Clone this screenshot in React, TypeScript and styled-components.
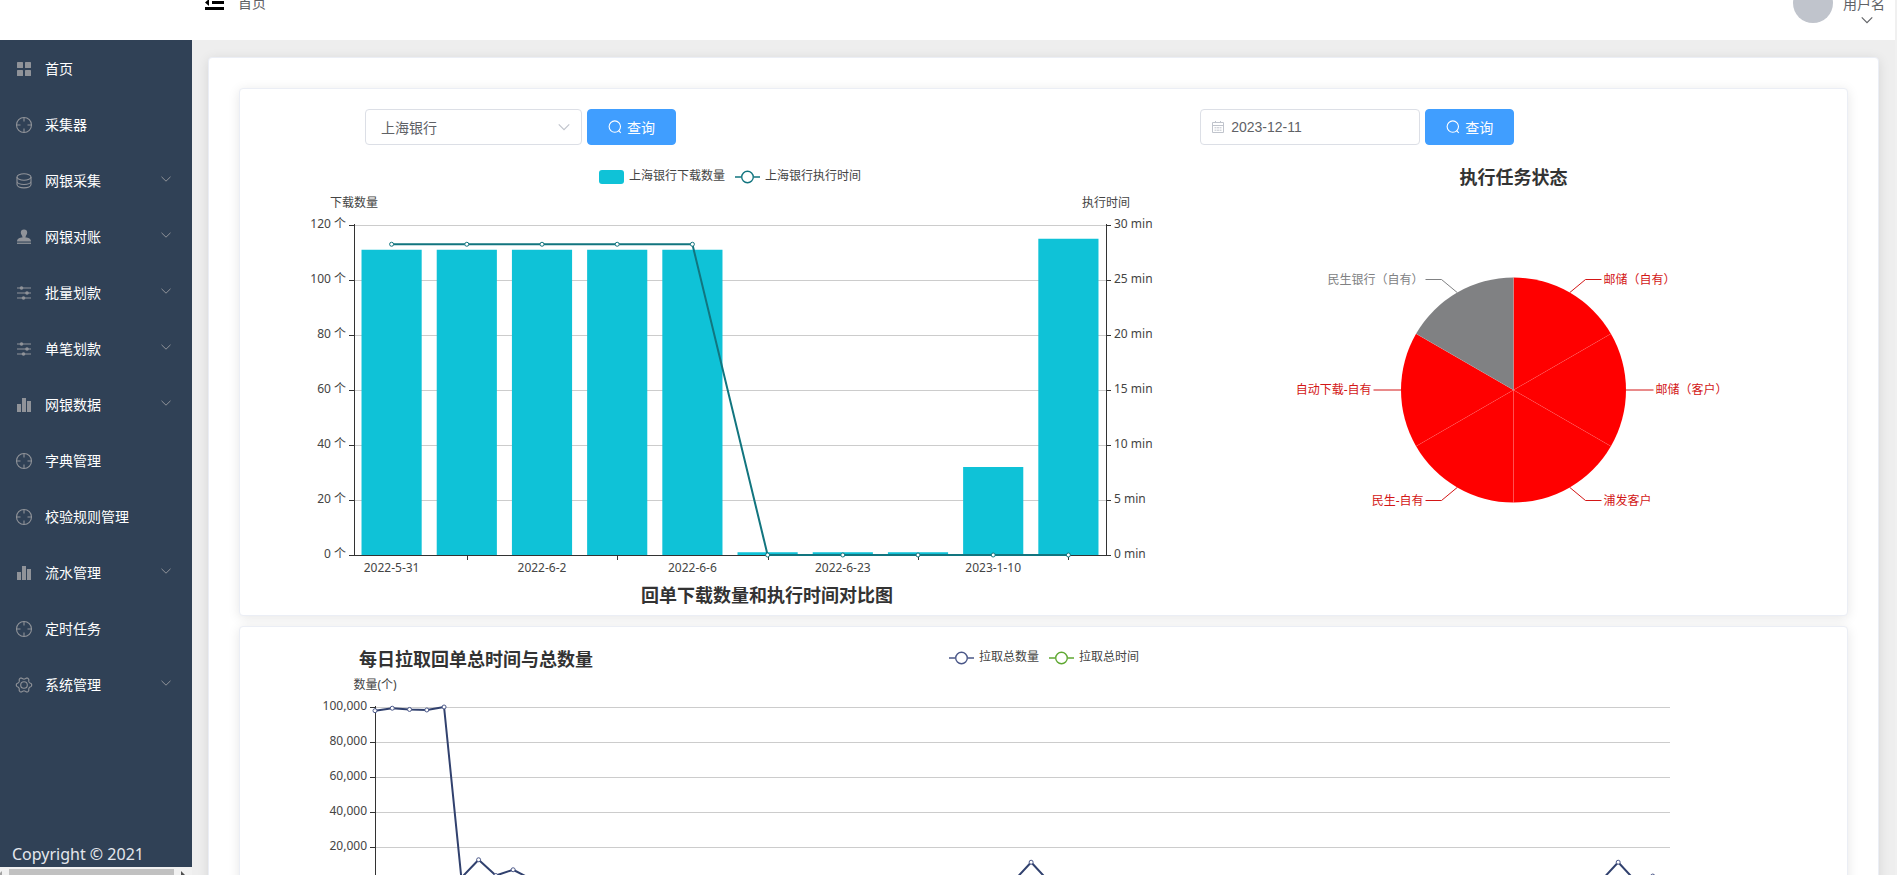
import React, { useLayoutEffect, useRef, useState } from 'react';
import styled, { createGlobalStyle } from 'styled-components';

const fontStack = '"Noto Sans", "Noto Sans CJK SC", sans-serif';

const GlobalStyle = createGlobalStyle`
  * { box-sizing: border-box; }
  body {
    margin: 0;
    font-family: ${fontStack};
    font-size: 14px;
    color: #606266;
    background: #f0f0f0;
  }
  button, input, select { font-family: inherit; font-size: 14px; }
`;

/* ---------- frame ---------- */

const Shell = styled.div`
  display: flex;
  flex-direction: column;
  height: 100vh;
  overflow: hidden;
  padding-right: 2px;
  background: #f0f0f0;
`;

const Header = styled.header`
  display: flex;
  flex: none;
  align-items: flex-end;
  justify-content: space-between;
  height: 40px;
  overflow: hidden;
  padding: 0 10px 17px 204px;
  background: #fff;
`;

const HeaderGroup = styled.div`
  display: flex;
  align-items: center;
  gap: 12px;
  height: 40px;
`;

const IconButton = styled.button`
  display: flex;
  padding: 0;
  border: 0;
  background: none;
  cursor: pointer;
`;

const Crumb = styled.a`
  line-height: 20px;
  color: #606266;
  text-decoration: none;
`;

const UserButton = styled.button`
  display: flex;
  align-items: flex-start;
  gap: 10px;
  height: 40px;
  padding: 0;
  border: 0;
  background: none;
  color: #606266;
  cursor: pointer;
`;

const Avatar = styled.span`
  width: 40px;
  height: 40px;
  border-radius: 50%;
  background: #c0c4cc;
`;

const UserName = styled.span`
  display: flex;
  flex-direction: column;
  align-items: center;
  padding-top: 12px;
  line-height: 18px;
`;

const UserArrow = styled.span`
  display: flex;
  padding-left: 5px;
`;

const Body = styled.div`
  display: flex;
  flex: 1;
  min-height: 0;
  background: #eee;
`;

/* ---------- sidebar ---------- */

const Aside = styled.aside`
  display: flex;
  flex: none;
  flex-direction: column;
  width: 192px;
  overflow: hidden;
  background: #304156;
`;

const Menu = styled.nav`
  display: flex;
  flex: 1;
  flex-direction: column;
  min-height: 0;
  overflow: hidden;
  padding-top: 1px;
`;

const MenuItem = styled.a`
  display: flex;
  flex: none;
  align-items: center;
  gap: 13px;
  width: 100%;
  height: 56px;
  padding: 0 20px 0 16px;
  border: 0;
  background: none;
  color: #fff;
  font-size: 14px;
  text-align: left;
  text-decoration: none;
  cursor: pointer;
`;

const MenuText = styled.span`
  padding-bottom: 2px;
`;

const MenuArrow = styled.span`
  display: flex;
  margin-left: auto;
  padding-bottom: 4px;
`;

const Copyright = styled.footer`
  flex: none;
  padding: 0 12px 1px;
  font-size: 16px;
  line-height: 24px;
  color: #e4e7ed;
`;

const ScrollTrack = styled.div`
  display: flex;
  flex: none;
  align-items: flex-end;
  justify-content: space-between;
  gap: 7px;
  height: 8px;
  padding-right: 7px;
  background: #f1f1f1;
`;

const ScrollThumb = styled.div`
  flex: 1;
  height: 6px;
  background: #c1c1c1;
`;

/* ---------- content ---------- */

const Main = styled.main`
  flex: 1;
  min-width: 0;
  overflow: hidden;
  padding: 17px 16px 16px;
`;

const Card = styled.section`
  border: 1px solid #ebeef5;
  border-radius: 4px;
  background: #fff;
  box-shadow: 0 2px 12px 0 rgba(0, 0, 0, 0.1);
`;

const PageCard = styled(Card)`
  display: flex;
  flex-direction: column;
  gap: 10px;
  padding: 30px;
`;

const ChartCard = styled(Card)`
  padding: 20px 20px 0;
`;

const Split = styled(ChartCard)`
  display: grid;
  grid-template-columns: 3fr 2fr;
`;

const Column = styled.div`
  min-width: 0;
`;

const Toolbar = styled.form<{ $indent?: number }>`
  display: flex;
  gap: 5px;
  margin-bottom: 20px;
  padding-left: ${(p) => p.$indent ?? 0}px;
`;

const Field = styled.label<{ $width: number }>`
  position: relative;
  display: block;
  width: ${(p) => p.$width}px;
  height: 36px;
`;

const FieldIcon = styled.span<{ $side: 'left' | 'right' }>`
  position: absolute;
  top: 0;
  ${(p) => p.$side}: 11px;
  display: flex;
  align-items: center;
  height: 36px;
  pointer-events: none;
`;

const Select = styled.select`
  width: 100%;
  height: 36px;
  padding: 0 30px 0 15px;
  border: 1px solid #dcdfe6;
  border-radius: 4px;
  background: #fff;
  color: #606266;
  appearance: none;
`;

const DateInput = styled.input`
  && { font-family: "Liberation Sans", Arial, sans-serif; }
  width: 100%;
  height: 36px;
  padding: 0 15px 0 30px;
  border: 1px solid #dcdfe6;
  border-radius: 4px;
  background: #fff;
  color: #606266;
`;

const QueryButton = styled.button`
  display: flex;
  align-items: center;
  gap: 5px;
  height: 36px;
  padding: 0 20px;
  border: 1px solid #409eff;
  border-radius: 4px;
  background: #409eff;
  color: #fff;
  cursor: pointer;
`;

const ChartBox = styled.div<{ $height: number }>`
  height: ${(p) => p.$height}px;
  overflow: hidden;
`;

const Label = styled.text<{ $fill?: string }>`
  font-family: ${fontStack};
  font-size: 12px;
  fill: ${(p) => p.$fill ?? '#444'};
`;

const ChartTitle = styled.text`
  font-family: ${fontStack};
  font-size: 18px;
  font-weight: 700;
  fill: #333;
`;

/* ---------- icons ---------- */

const ICON = '#909399';

const ChevronDown = ({ size = 12, color = ICON }: { size?: number; color?: string }) => (
  <svg width={size} height={size} viewBox="0 0 12 12" fill="none" stroke={color} strokeWidth="1">
    <path d="M1.5 3.8 6 8.2 10.5 3.8" />
  </svg>
);

const gearPath = (() => {
  const pts: string[] = [];
  for (let i = 0; i <= 96; i++) {
    const a = (i / 96) * Math.PI * 2;
    const w = Math.cos(6 * a);
    const r = 6.8 + 0.9 * Math.sign(w) * Math.pow(Math.abs(w), 0.6);
    pts.push(`${(9 + r * Math.cos(a)).toFixed(2)} ${(9 + r * Math.sin(a)).toFixed(2)}`);
  }
  return `M${pts.join('L')}Z`;
})();

type IconName = 'menu' | 'aim' | 'coin' | 'stamp' | 'sliders' | 'bars' | 'gear';

const MenuIcon = ({ name }: { name: IconName }) => (
  <svg width="16" height="16" viewBox="1 1 16 16" overflow="visible" fill="none" stroke={ICON} strokeWidth="1.1">
    {name === 'menu' && (
      <g fill={ICON} stroke="none">
        <rect x="2" y="2" width="6" height="6" rx=".6" />
        <rect x="10" y="2" width="6" height="6" rx=".6" />
        <rect x="2" y="10" width="6" height="6" rx=".6" />
        <rect x="10" y="10" width="6" height="6" rx=".6" />
      </g>
    )}
    {name === 'aim' && (
      <>
        <circle cx="9" cy="9" r="7.5" />
        <path d="M9 1.5v4M9 12.5v4M1.5 9h4M12.5 9h4" />
      </>
    )}
    {name === 'coin' && (
      <>
        <ellipse cx="9" cy="5" rx="7" ry="3.2" />
        <path d="M2 5v4.200c0 1.800 3 3.300 7 3.300s7-1.500 7-3.300V5M2 8v4.600c0 1.800 3 3.300 7 3.300s7-1.500 7-3.300V8" />
      </>
    )}
    {name === 'stamp' && (
      <g fill={ICON} stroke="none">
        <path d="M9 1.500a3.200 3.200 0 0 1 3.200 3.200c0 2-1.700 2.600-1.700 4.800 3 .2 5.500 1.200 5.500 4H2c0-2.800 2.500-3.800 5.500-4 0-2.200-1.700-2.800-1.700-4.800A3.200 3.200 0 0 1 9 1.500Z" />
        <rect x="2" y="14.600" width="14" height="1.300" />
      </g>
    )}
    {name === 'sliders' && (
      <>
        <path d="M2 4h14M2 9h14M2 14h14" />
        <g fill={ICON} stroke="none">
          <circle cx="6.500" cy="4" r="1.800" />
          <circle cx="12" cy="9" r="1.800" />
          <circle cx="8.500" cy="14" r="1.800" />
        </g>
      </>
    )}
    {name === 'bars' && (
      <g fill={ICON} stroke="none">
        <rect x="2" y="8" width="4" height="8" />
        <rect x="7" y="2" width="4" height="14" />
        <rect x="12" y="5" width="4" height="11" />
      </g>
    )}
    {name === 'gear' && (
      <>
        <path d={gearPath} />
        <circle cx="9" cy="9" r="3.300" />
      </>
    )}
  </svg>
);

const FoldIcon = () => (
  <svg width="22" height="20" viewBox="0 0 22 20" fill="#000">
    <rect x="1" y="1" width="19" height="3" />
    <rect x="8" y="8" width="12" height="3" />
    <rect x="1" y="14" width="19" height="3" />
    <path d="M1 9.500 5 6v7Z" />
  </svg>
);

const SearchIcon = () => (
  <svg width="14" height="14" viewBox="0 0 14 14" fill="none" stroke="#fff" strokeWidth="1.100">
    <circle cx="6.800" cy="6.600" r="5.700" />
    <path d="M10.600 10.600 12.800 12.900" />
  </svg>
);

const CalendarIcon = () => (
  <svg width="14" height="14" viewBox="0 0 14 14" fill="none" stroke="#c0c4cc" strokeWidth="1">
    <path d="M1.500 2.500h11v10h-11zM1.500 5.500h11M4.500 1v2M9.500 1v2" />
    <path d="M3.500 7.800h2M6 7.800h2M8.500 7.800h2M3.500 10.200h2M6 10.200h2M8.500 10.200h2" />
  </svg>
);

/* ---------- charts ---------- */

function useWidth(initial: number) {
  const ref = useRef<HTMLDivElement>(null);
  const [width, setWidth] = useState(initial);
  useLayoutEffect(() => {
    const el = ref.current;
    if (!el) return;
    const measure = () => setWidth(Math.round(el.clientWidth));
    measure();
    const observer = new ResizeObserver(measure);
    observer.observe(el);
    return () => observer.disconnect();
  }, []);
  return [ref, width] as const;
}

const LineLegend = ({ x, y, color, text }: { x: number; y: number; color: string; text: string }) => (
  <g>
    <path d={`M${x} ${y}h6M${x + 19} ${y}h6`} stroke={color} strokeWidth="1.500" />
    <circle cx={x + 12.5} cy={y} r="5.800" fill="#fff" stroke={color} strokeWidth="1.400" />
    <Label x={x + 30} y={y + 3}>{text}</Label>
  </g>
);

const BAR = '#0fc2d7';
const TEAL = '#12757f';
const banks = [
  { date: '2022-5-31', count: 111, minutes: 28.25 },
  { date: '2022-6-1', count: 111, minutes: 28.25 },
  { date: '2022-6-2', count: 111, minutes: 28.25 },
  { date: '2022-6-5', count: 111, minutes: 28.25 },
  { date: '2022-6-6', count: 111, minutes: 28.25 },
  { date: '2022-6-22', count: 1, minutes: 0 },
  { date: '2022-6-23', count: 1, minutes: 0 },
  { date: '2022-6-24', count: 1, minutes: 0 },
  { date: '2023-1-10', count: 32, minutes: 0 },
  { date: '2023-1-11', count: 115, minutes: 0 },
];

function BankChart() {
  const [ref, width] = useWidth(940);
  const height = 450;
  const left = Math.round(width * 0.1);
  const right = width - left;
  const top = 60;
  const bottom = height - 60;
  const plot = bottom - top;
  const step = (right - left) / banks.length;
  const cx = (i: number) => left + step * (i + 0.5);
  const lineY = (m: number) => bottom - (m / 30) * plot;
  const steps = [0, 1, 2, 3, 4, 5, 6];
  const legendX = Math.round(width / 2 - 131);
  return (
    <ChartBox ref={ref} $height={height}>
      <svg width={width} height={height} role="img" aria-label="回单下载数量和执行时间对比图">
        <rect x={legendX} y="5" width="25" height="14" rx="3" fill={BAR} />
        <Label x={legendX + 30} y="15">上海银行下载数量</Label>
        <LineLegend x={legendX + 136} y={12} color={TEAL} text="上海银行执行时间" />
        <Label x={left} y="42" textAnchor="middle">下载数量</Label>
        <Label x={right} y="42" textAnchor="middle">执行时间</Label>
        {steps.map((i) => {
          const y = bottom - (plot / 6) * i;
          return (
            <g key={i}>
              {i > 0 && <path d={`M${left} ${y + 0.5}H${right}`} stroke="#ccc" />}
              <path d={`M${left - 5} ${y + 0.5}h5M${right} ${y + 0.5}h5`} stroke="#333" />
              <Label x={left - 8} y={y + 3} textAnchor="end">{`${i * 20} 个`}</Label>
              <Label x={right + 8} y={y + 3}>{`${i * 5} min`}</Label>
            </g>
          );
        })}
        {banks.map((b, i) => {
          const h = (b.count / 120) * plot;
          return <rect key={b.date} x={cx(i) - step * 0.4} y={bottom - h} width={step * 0.8} height={h} fill={BAR} />;
        })}
        <path d={`M${left + 0.5} ${top - 1}V${bottom + 1}M${right + 0.5} ${top - 1}V${bottom + 1}M${left} ${bottom + 0.5}H${right}`} stroke="#333" />
        {banks.map((b, i) =>
          i % 2 ? (
            <path key={b.date} d={`M${Math.round(cx(i)) + 0.5} ${bottom}v5`} stroke="#333" />
          ) : (
            <Label key={b.date} x={cx(i)} y={bottom + 17} textAnchor="middle">{b.date}</Label>
          ),
        )}
        <polyline points={banks.map((b, i) => `${cx(i)},${lineY(b.minutes)}`).join(' ')} fill="none" stroke={TEAL} strokeWidth="2" strokeLinejoin="bevel" />
        {banks.map((b, i) => (
          <circle key={b.date} cx={cx(i)} cy={lineY(b.minutes)} r="2" fill="#fff" stroke={TEAL} />
        ))}
        <ChartTitle x={width / 2 + 37} y="437" textAnchor="middle">回单下载数量和执行时间对比图</ChartTitle>
      </svg>
    </ChartBox>
  );
}

const RED_LABEL = '#d31616';
const GRAY = '#808183';
const slices = [
  { name: '邮储（自有）', color: '#f00', label: RED_LABEL },
  { name: '邮储（客户）', color: '#f00', label: RED_LABEL },
  { name: '浦发客户', color: '#f00', label: RED_LABEL },
  { name: '民生-自有', color: '#f00', label: RED_LABEL },
  { name: '自动下载-自有', color: '#f00', label: RED_LABEL },
  { name: '民生银行（自有）', color: GRAY, label: GRAY },
];

function StatusPie() {
  const [ref, width] = useWidth(627);
  const height = 450;
  const cx = width / 2;
  const cy = height / 2;
  const r = 112.5;
  const at = (deg: number, radius = r) => {
    const a = (deg * Math.PI) / 180;
    return [cx + radius * Math.sin(a), cy - radius * Math.cos(a)];
  };
  return (
    <ChartBox ref={ref} $height={height}>
      <svg width={width} height={height} role="img" aria-label="执行任务状态">
        <ChartTitle x={cx} y="19" textAnchor="middle">执行任务状态</ChartTitle>
        {slices.map((s, i) => {
          const [x1, y1] = at(i * 60);
          const [x2, y2] = at(i * 60 + 60);
          return <path key={s.name} d={`M${cx} ${cy}L${x1} ${y1}A${r} ${r} 0 0 1 ${x2} ${y2}Z`} fill={s.color} />;
        })}
        {slices.map((s, i) => {
          const [x, y] = at(i * 60);
          return <path key={s.name} d={`M${cx} ${cy}L${x} ${y}`} stroke="#fff" strokeOpacity="0.12" strokeWidth="0.800" />;
        })}
        {slices.map((s, i) => {
          const mid = i * 60 + 30;
          const side = mid < 180 ? 1 : -1;
          const level = mid === 90 || mid === 270;
          const [x, y] = at(mid);
          const ly = level ? cy : cy + (y < cy ? -110.5 : 110.5);
          const end = cx + side * (level ? 140 : 88);
          return (
            <g key={s.name}>
              <path d={level ? `M${x} ${ly}H${end}` : `M${x} ${y}L${cx + side * 72} ${ly}H${end}`} fill="none" stroke={s.label} />
              <Label $fill={s.label} x={end + side * 2} y={ly + 4} textAnchor={side > 0 ? 'start' : 'end'}>{s.name}</Label>
            </g>
          );
        })}
      </svg>
    </ChartBox>
  );
}

const NAVY = '#31416e';
const daily = Array.from({ length: 76 }, (_, i) => {
  const known: Record<number, number> = {
    0: 97900, 1: 99300, 2: 98600, 3: 98300, 4: 100000, 5: 2400,
    6: 12700, 7: 3700, 8: 7000, 9: 1900, 38: 11300, 72: 11300, 74: 3400,
  };
  return known[i] ?? 600;
});

function DailyChart() {
  const [ref, width] = useWidth(1567);
  const height = 295;
  const left = 115;
  const right = width - Math.round(width * 0.1);
  const top = 60;
  const bottom = 235;
  const x = (i: number) => left + ((right - left) * i) / (daily.length - 1);
  const y = (v: number) => bottom - (v / 100000) * (bottom - top);
  const legendX = Math.round(width / 2) - 95;
  return (
    <ChartBox ref={ref} $height={height}>
      <svg width={width} height={height} role="img" aria-label="每日拉取回单总时间与总数量">
        <ChartTitle x="99" y="19">每日拉取回单总时间与总数量</ChartTitle>
        <LineLegend x={legendX} y={11} color="#4a5788" text="拉取总数量" />
        <LineLegend x={legendX + 100} y={11} color="#5fa832" text="拉取总时间" />
        <Label x={left} y="42" textAnchor="middle">数量(个)</Label>
        {[0, 20, 40, 60, 80, 100].map((k) => {
          const ly = y(k * 1000);
          return (
            <g key={k}>
              <path d={`M${left} ${ly + 0.5}H${right}`} stroke={k ? '#ccc' : '#333'} />
              <path d={`M${left - 5} ${ly + 0.5}h5`} stroke="#333" />
              {k > 0 && <Label x={left - 8} y={ly + 3} textAnchor="end">{`${k},000`}</Label>}
            </g>
          );
        })}
        <path d={`M${left + 0.5} ${top - 1}V${bottom}`} stroke="#333" />
        <polyline points={daily.map((v, i) => `${x(i)},${y(v)}`).join(' ')} fill="none" stroke={NAVY} strokeWidth="2" strokeLinejoin="bevel" />
        {daily.map((v, i) => (
          <circle key={i} cx={x(i)} cy={y(v)} r="2" fill="#fff" stroke="#4a5788" />
        ))}
      </svg>
    </ChartBox>
  );
}

/* ---------- page ---------- */

const menu: { icon: IconName; text: string; sub?: boolean }[] = [
  { icon: 'menu', text: '首页' },
  { icon: 'aim', text: '采集器' },
  { icon: 'coin', text: '网银采集', sub: true },
  { icon: 'stamp', text: '网银对账', sub: true },
  { icon: 'sliders', text: '批量划款', sub: true },
  { icon: 'sliders', text: '单笔划款', sub: true },
  { icon: 'bars', text: '网银数据', sub: true },
  { icon: 'aim', text: '字典管理' },
  { icon: 'aim', text: '校验规则管理' },
  { icon: 'bars', text: '流水管理', sub: true },
  { icon: 'aim', text: '定时任务' },
  { icon: 'gear', text: '系统管理', sub: true },
];

export default function App() {
  const [date, setDate] = useState('2023-12-11');
  return (
    <Shell>
      <GlobalStyle />
      <Header>
        <HeaderGroup>
          <IconButton type="button" aria-label="折叠菜单"><FoldIcon /></IconButton>
          <Crumb href="#">首页</Crumb>
        </HeaderGroup>
        <UserButton type="button">
          <Avatar />
          <UserName>
            用户名
            <UserArrow><ChevronDown size={14} color="#606266" /></UserArrow>
          </UserName>
        </UserButton>
      </Header>
      <Body>
        <Aside>
          <Menu>
            {menu.map((m) =>
              m.sub ? (
                <MenuItem as="button" type="button" key={m.text}>
                  <MenuIcon name={m.icon} />
                  <MenuText>{m.text}</MenuText>
                  <MenuArrow><ChevronDown /></MenuArrow>
                </MenuItem>
              ) : (
                <MenuItem href="#" key={m.text}>
                  <MenuIcon name={m.icon} />
                  <MenuText>{m.text}</MenuText>
                </MenuItem>
              ),
            )}
          </Menu>
          <Copyright>Copyright © 2021</Copyright>
          <ScrollTrack aria-hidden="true">
            <svg width="2" height="4" viewBox="0 0 2 4" fill="#a3a3a3"><path d="M2 0v4H0V2Z" /></svg>
            <ScrollThumb />
            <svg width="4" height="4" viewBox="0 0 4 4" fill="#505050"><path d="M0 0 4 4H0Z" /></svg>
          </ScrollTrack>
        </Aside>
        <Main>
          <PageCard>
            <Split>
              <Column>
                <Toolbar $indent={105} onSubmit={(e) => e.preventDefault()}>
                  <Field $width={217}>
                    <Select aria-label="银行" defaultValue="上海银行">
                      <option>上海银行</option>
                    </Select>
                    <FieldIcon $side="right"><ChevronDown size={14} color="#c0c4cc" /></FieldIcon>
                  </Field>
                  <QueryButton type="submit"><SearchIcon />查询</QueryButton>
                </Toolbar>
                <BankChart />
              </Column>
              <Column>
                <Toolbar onSubmit={(e) => e.preventDefault()}>
                  <Field $width={220}>
                    <FieldIcon $side="left"><CalendarIcon /></FieldIcon>
                    <DateInput type="text" aria-label="日期" value={date} onChange={(e) => setDate(e.target.value)} />
                  </Field>
                  <QueryButton type="submit"><SearchIcon />查询</QueryButton>
                </Toolbar>
                <StatusPie />
              </Column>
            </Split>
            <ChartCard>
              <DailyChart />
            </ChartCard>
          </PageCard>
        </Main>
      </Body>
    </Shell>
  );
}
